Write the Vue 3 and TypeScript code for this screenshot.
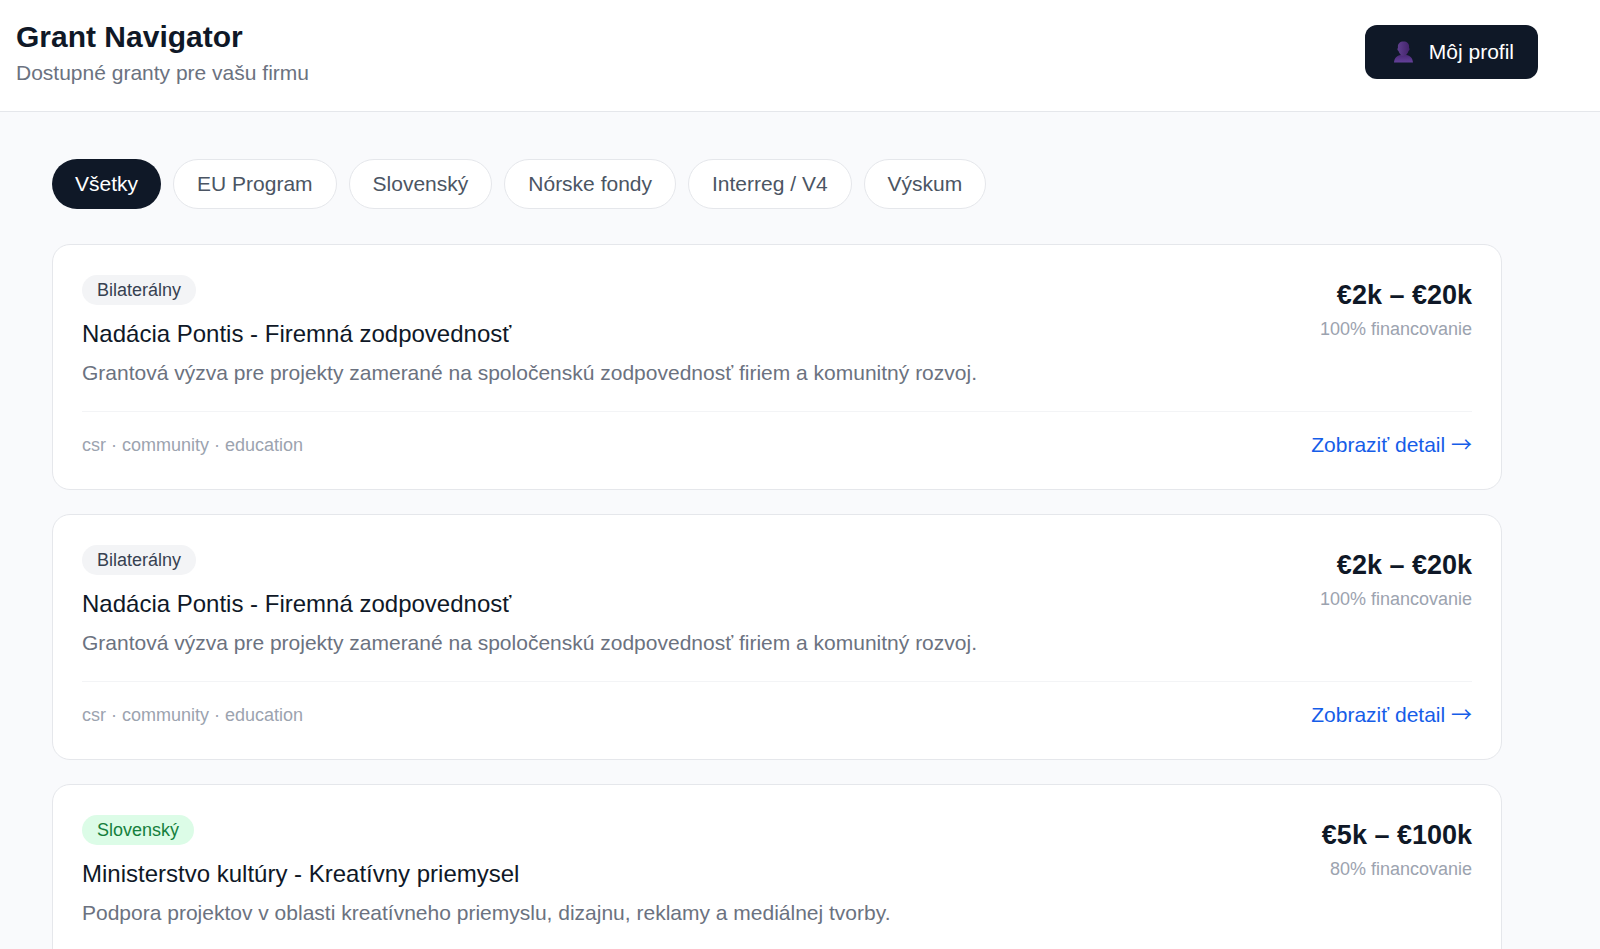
<script setup lang="ts">
import { ref } from 'vue'

interface Grant {
  id: number
  type: string
  tone: 'neutral' | 'green'
  title: string
  description: string
  amount: string
  funding: string
  tags: string[]
}

const filters: string[] = ['Všetky', 'EU Program', 'Slovenský', 'Nórske fondy', 'Interreg / V4', 'Výskum']
const activeFilter = ref<string>('Všetky')

const grants: Grant[] = [
  {
    id: 1,
    type: 'Bilaterálny',
    tone: 'neutral',
    title: 'Nadácia Pontis - Firemná zodpovednosť',
    description: 'Grantová výzva pre projekty zamerané na spoločenskú zodpovednosť firiem a komunitný rozvoj.',
    amount: '€2k – €20k',
    funding: '100% financovanie',
    tags: ['csr', 'community', 'education'],
  },
  {
    id: 2,
    type: 'Bilaterálny',
    tone: 'neutral',
    title: 'Nadácia Pontis - Firemná zodpovednosť',
    description: 'Grantová výzva pre projekty zamerané na spoločenskú zodpovednosť firiem a komunitný rozvoj.',
    amount: '€2k – €20k',
    funding: '100% financovanie',
    tags: ['csr', 'community', 'education'],
  },
  {
    id: 3,
    type: 'Slovenský',
    tone: 'green',
    title: 'Ministerstvo kultúry - Kreatívny priemysel',
    description: 'Podpora projektov v oblasti kreatívneho priemyslu, dizajnu, reklamy a mediálnej tvorby.',
    amount: '€5k – €100k',
    funding: '80% financovanie',
    tags: [],
  },
]
</script>

<template>
  <div class="page">
    <header class="header">
      <div>
        <h1 class="brand">Grant Navigator</h1>
        <p class="tagline">Dostupné granty pre vašu firmu</p>
      </div>
      <button type="button" class="profile">
        <svg class="profile-icon" viewBox="0 0 28 28" aria-hidden="true">
          <defs>
            <linearGradient id="head" x1="0" y1="0" x2="1" y2="0">
              <stop offset="0" stop-color="#60408f" />
              <stop offset="1" stop-color="#43236b" />
            </linearGradient>
            <linearGradient id="bust" x1="0" y1="0" x2="0" y2="1">
              <stop offset="0" stop-color="#4b2a78" />
              <stop offset="1" stop-color="#64419a" />
            </linearGradient>
          </defs>
          <path
            fill="url(#head)"
            d="M14.500 3.500c3.600 0 5.600 2 5.600 5.200 0 .5 0 .9-.1 1.300.9.2.8 2.600-.5 2.900-.4 1.500-1.100 2.700-2.100 3.500v2.600h-5.800v-2.600c-1-.8-1.700-2-2.100-3.500-1.300-.3-1.400-2.700-.5-2.900-.1-.4-.1-.8-.1-1.300C8.900 5.500 10.900 3.500 14.500 3.500Z"
          />
          <path fill="url(#bust)" d="M5 24.500c.3-4.300 3-7 6.600-7.500 1.700 1.300 4.100 1.300 5.800 0 3.600.5 6.300 3.200 6.600 7.500Z" />
        </svg>
        <span>Môj profil</span>
      </button>
    </header>

    <main class="main">
      <nav class="filters" aria-label="Filter">
        <button
          v-for="filter in filters"
          :key="filter"
          type="button"
          class="pill"
          :class="{ active: filter === activeFilter }"
          @click="activeFilter = filter"
        >
          {{ filter }}
        </button>
      </nav>

      <article v-for="grant in grants" :key="grant.id" class="card">
        <div class="card-body">
          <div class="info">
            <span class="badge" :class="grant.tone">{{ grant.type }}</span>
            <h2 class="title">{{ grant.title }}</h2>
            <p class="description">{{ grant.description }}</p>
          </div>
          <div class="funding">
            <p class="amount">{{ grant.amount }}</p>
            <p class="share">{{ grant.funding }}</p>
          </div>
        </div>
        <footer class="card-footer">
          <span class="tags">{{ grant.tags.join(' · ') }}</span>
          <a v-if="grant.tags.length" href="#" class="detail">Zobraziť detail <span class="arrow">→</span></a>
        </footer>
      </article>
    </main>
  </div>
</template>

<style>
html {
  scrollbar-width: none;
}
body {
  margin: 0;
  background: #f9fafc;
}
</style>

<style scoped>
.page {
  min-height: 100vh;
  background: #f9fafc;
  color: #0f1827;
  font-family: "Liberation Sans", Arial, sans-serif;
  font-size: 21px;
  line-height: 30px;
}
h1,
h2,
p {
  margin: 0;
}
button {
  font: inherit;
  cursor: pointer;
}
.header {
  display: flex;
  align-items: center;
  justify-content: space-between;
  padding: 16px 62px 23px 16px;
  background: #fff;
  border-bottom: 1px solid #e5e7eb;
}
.brand {
  font-size: 30px;
  line-height: 42px;
  font-weight: 700;
}
.tagline {
  color: #6b7280;
}
.profile {
  display: flex;
  align-items: center;
  gap: 12px;
  padding: 12px 24px;
  border: 0;
  border-radius: 12px;
  background: #0f1827;
  color: #fff;
}
.profile-icon {
  width: 28px;
  height: 28px;
}
.main {
  display: flex;
  flex-direction: column;
  gap: 24px;
  padding: 47px 98px 24px 52px;
}
.filters {
  display: flex;
  flex-wrap: wrap;
  gap: 12px;
  margin-bottom: 11px;
}
.pill {
  padding: 9px 23px;
  border: 1px solid #e5e7eb;
  border-radius: 25px;
  background: #fff;
  color: #4b5563;
}
.pill.active {
  padding: 10px 23px;
  border: 0;
  background: #0f1827;
  color: #fff;
}
.card {
  padding: 30px 29px 29px;
  border: 1px solid #e5e7eb;
  border-radius: 18px;
  background: #fff;
}
.card-body {
  display: flex;
  justify-content: space-between;
  gap: 24px;
}
.info {
  display: flex;
  flex-direction: column;
  align-items: flex-start;
}
.badge {
  padding: 0 15px;
  border-radius: 15px;
  font-size: 18px;
}
.badge.neutral {
  background: #f3f4f6;
  color: #374151;
}
.badge.green {
  background: #dcfce7;
  color: #15803d;
}
.title {
  margin: 11px 0 6px;
  font-size: 24px;
  line-height: 36px;
  font-weight: 400;
}
.description {
  color: #6b7280;
}
.funding {
  flex-shrink: 0;
  text-align: right;
}
.amount {
  font-size: 27px;
  line-height: 40px;
  font-weight: 700;
}
.share {
  font-size: 18px;
  line-height: 28px;
  color: #9ca3af;
}
.card-footer {
  display: flex;
  align-items: center;
  justify-content: space-between;
  min-height: 30px;
  margin-top: 23px;
  padding-top: 18px;
  border-top: 1px solid #f3f4f6;
}
.tags {
  font-size: 18px;
  color: #9ca3af;
}
.detail {
  color: #155de8;
  text-decoration: none;
}
.arrow {
  font-family: "Noto Sans CJK JP", sans-serif;
  line-height: 20px;
}
</style>
